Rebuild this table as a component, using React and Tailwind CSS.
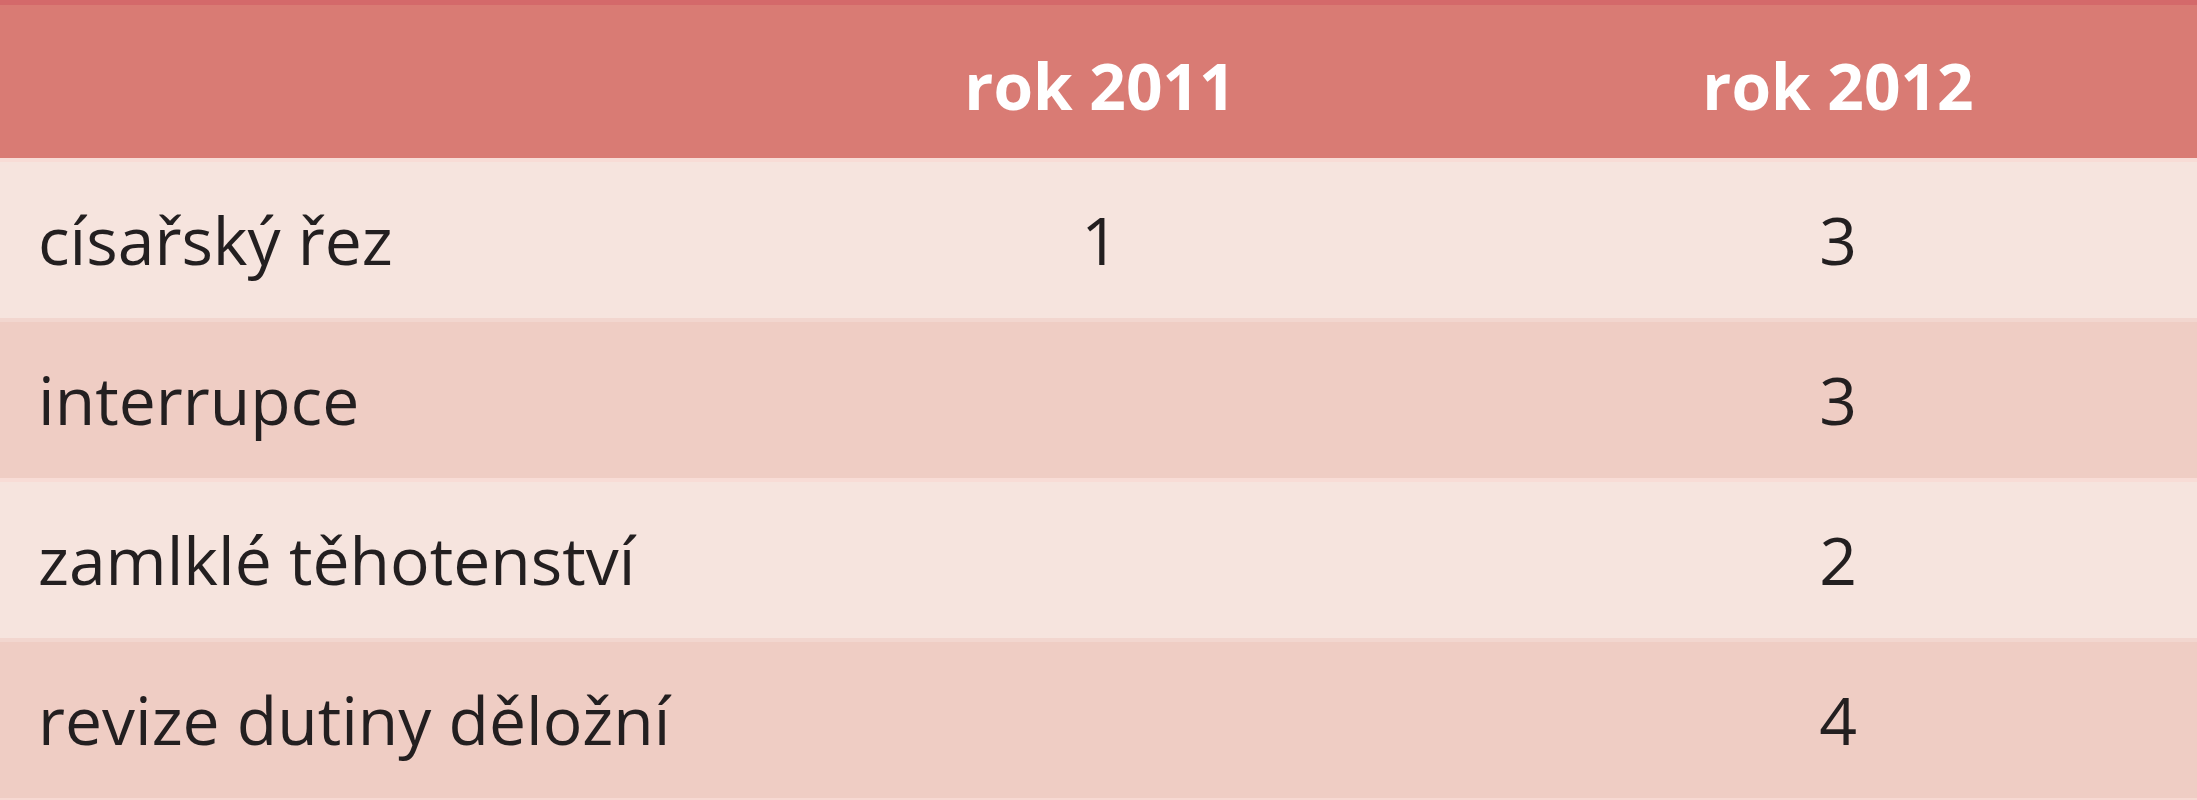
const rows = [
  { label: "císařský řez", y2011: "1", y2012: "3", light: true },
  { label: "interrupce", y2011: "", y2012: "3", light: false },
  { label: "zamlklé těhotenství", y2011: "", y2012: "2", light: true },
  { label: "revize dutiny děložní", y2011: "", y2012: "4", light: false },
];

export default function App() {
  return (
    <div className="w-[2197px] h-[800px] bg-[#f7d9d3] font-['Open_Sans',sans-serif] text-[#231f20]">
      <div className="border-t-[5px] border-[#d4696a] bg-[#d97b74]">
        <div className="grid h-[153px] grid-cols-[721px_758px_1fr] items-center pt-[8px] text-[64px] font-bold text-white">
          <div />
          <div className="text-center">rok 2011</div>
          <div className="text-center">rok 2012</div>
        </div>
      </div>
      {rows.map((row) => (
        <div
          key={row.label}
          className={
            row.light
              ? "grid h-[160px] grid-cols-[721px_758px_1fr] items-center border-t-[4px] border-[#f8dcd6] bg-[#f6e4de] pb-[2px] text-[66px]"
              : "grid h-[160px] grid-cols-[721px_758px_1fr] items-center border-t-[4px] border-[#f2d6cf] bg-[#efcdc4] pb-[2px] text-[66px]"
          }
        >
          <div className="pl-[38px] whitespace-nowrap">{row.label}</div>
          <div className="text-center">{row.y2011}</div>
          <div className="text-center">{row.y2012}</div>
        </div>
      ))}
    </div>
  );
}
